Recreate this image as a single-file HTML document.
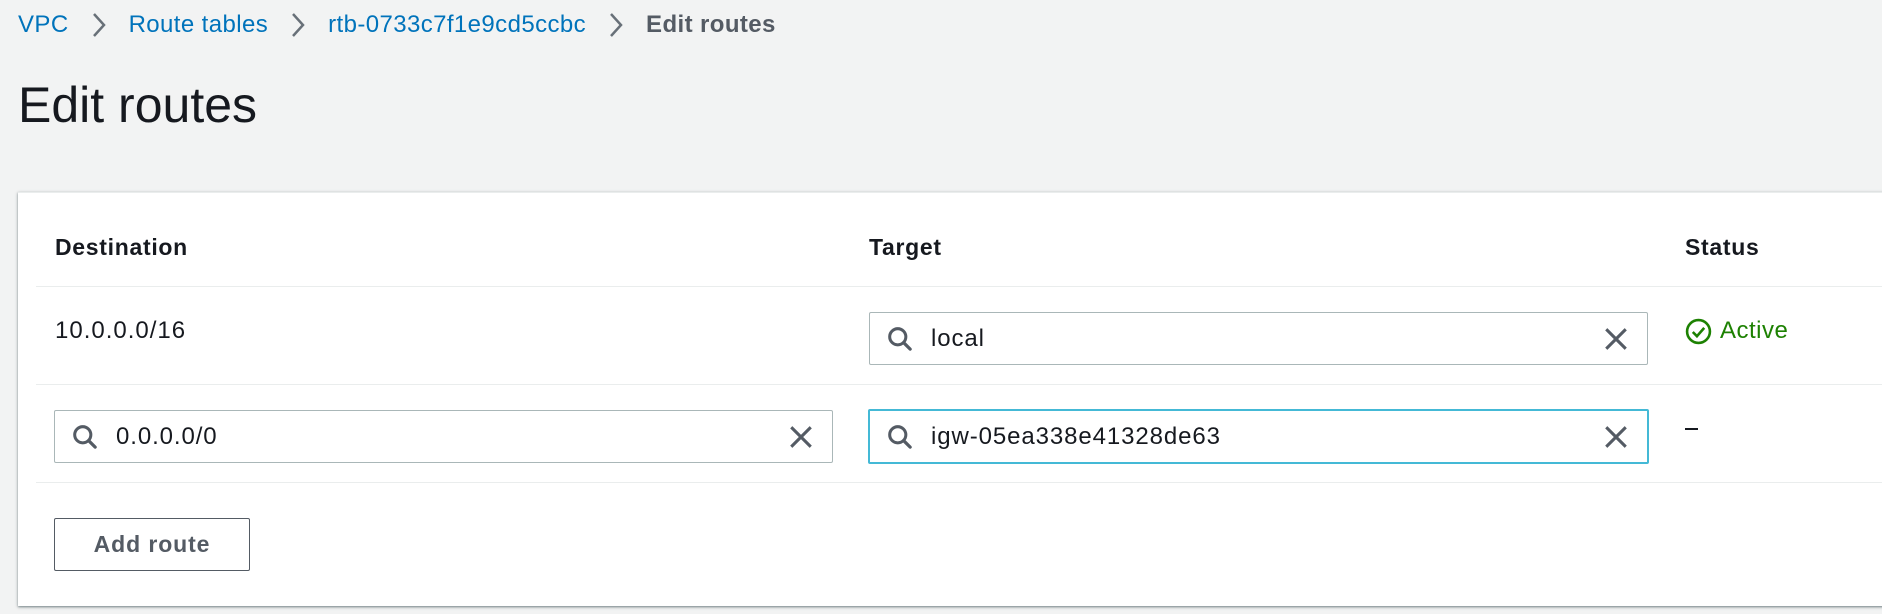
<!DOCTYPE html>
<html><head><meta charset="utf-8"><style>
*{box-sizing:border-box;margin:0;padding:0}
body{width:1882px;height:614px;background:#f2f3f3;font-family:"Liberation Sans",sans-serif;color:#16191f;position:relative;overflow:hidden}
.a{position:absolute;white-space:nowrap}
.bc{top:10px;left:18px;font-size:24px;letter-spacing:0.4px;line-height:28px;display:flex;align-items:center}
.bc .l{color:#0073bb}
.bc .s{display:inline-block;width:24px;height:30px;margin:0 18px 0 18px}
.h1{top:77px;left:18px;font-size:50px;line-height:56px;color:#16191f}
.card{position:absolute;top:192px;left:18px;width:1900px;height:414px;background:#fff;box-shadow:0 1px 2px rgba(0,28,36,.4),0 1px 4px rgba(0,28,36,.2);border-top:1px solid #eaeded}
.th{font-weight:bold;font-size:23px;letter-spacing:0.7px;top:234px}
.ln{position:absolute;left:36px;right:0;height:1px;background:#eaeded}
.inp{position:absolute;height:53px;border:1px solid #aab7b8;border-radius:2px;background:#fff;font-size:24px;letter-spacing:0.9px}
.inp .t{position:absolute;left:61px;top:12px}
.inp svg{position:absolute}
.foc{border:2px solid #44b9d6}
.btn{position:absolute;left:54px;top:518px;width:196px;height:53px;border:1px solid #545b64;border-radius:2px;font-weight:bold;font-size:23px;letter-spacing:0.9px;color:#545b64;text-align:center;line-height:51px;background:#fff}
</style></head><body>
<div class="a bc"><span class="l">VPC</span><svg class="s" viewBox="0 0 24 30"><path d="M7 4l10 11-10 11" fill="none" stroke="#687078" stroke-width="2.5"/></svg><span class="l">Route tables</span><svg class="s" viewBox="0 0 24 30"><path d="M7 4l10 11-10 11" fill="none" stroke="#687078" stroke-width="2.5"/></svg><span class="l">rtb-0733c7f1e9cd5ccbc</span><svg class="s" viewBox="0 0 24 30"><path d="M7 4l10 11-10 11" fill="none" stroke="#687078" stroke-width="2.5"/></svg><span style="color:#545b64;font-weight:bold">Edit routes</span></div>
<div class="a h1">Edit routes</div>
<div class="card"></div>
<div class="a th" style="left:55px">Destination</div>
<div class="a th" style="left:869px">Target</div>
<div class="a th" style="left:1685px">Status</div>
<div class="ln" style="top:286px"></div>
<div class="a" style="left:55px;top:317px;font-size:24px;letter-spacing:1px">10.0.0.0/16</div>
<div class="inp" style="left:869px;top:312px;width:779px">
<svg style="left:17px;top:13px" width="28" height="28" viewBox="0 0 26 26"><circle cx="10" cy="10" r="7.5" fill="none" stroke="#545b64" stroke-width="2.8"/><path d="M15.5 15.5l6 6" stroke="#545b64" stroke-width="3" stroke-linecap="round"/></svg>
<span class="t">local</span>
<svg style="left:733px;top:13px" width="26" height="26" viewBox="0 0 24 24"><path d="M3 3l18 18M21 3L3 21" stroke="#545b64" stroke-width="2.8"/></svg></div>
<svg class="a" style="left:1685px;top:318px" width="27" height="27" viewBox="0 0 26 26"><circle cx="13" cy="13" r="11" fill="none" stroke="#1d8102" stroke-width="2.5"/><path d="M7.5 13.5l4 4 7-8" fill="none" stroke="#1d8102" stroke-width="2.5"/></svg>
<div class="a" style="left:1720px;top:317px;font-size:24px;letter-spacing:0.5px;color:#1d8102">Active</div>
<div class="ln" style="top:384px"></div>
<div class="inp" style="left:54px;top:410px;width:779px">
<svg style="left:17px;top:13px" width="28" height="28" viewBox="0 0 26 26"><circle cx="10" cy="10" r="7.5" fill="none" stroke="#545b64" stroke-width="2.8"/><path d="M15.5 15.5l6 6" stroke="#545b64" stroke-width="3" stroke-linecap="round"/></svg>
<span class="t">0.0.0.0/0</span>
<svg style="left:733px;top:13px" width="26" height="26" viewBox="0 0 24 24"><path d="M3 3l18 18M21 3L3 21" stroke="#545b64" stroke-width="2.8"/></svg></div>
<div class="inp foc" style="left:868px;top:409px;width:781px;height:55px">
<svg style="left:17px;top:13px" width="28" height="28" viewBox="0 0 26 26"><circle cx="10" cy="10" r="7.5" fill="none" stroke="#545b64" stroke-width="2.8"/><path d="M15.5 15.5l6 6" stroke="#545b64" stroke-width="3" stroke-linecap="round"/></svg>
<span class="t">igw-05ea338e41328de63</span>
<svg style="left:733px;top:13px" width="26" height="26" viewBox="0 0 24 24"><path d="M3 3l18 18M21 3L3 21" stroke="#545b64" stroke-width="2.8"/></svg></div>
<div class="a" style="left:1685px;top:428px;width:13px;height:2px;background:#16191f"></div>
<div class="ln" style="top:482px"></div>
<div class="btn">Add route</div>
</body></html>
